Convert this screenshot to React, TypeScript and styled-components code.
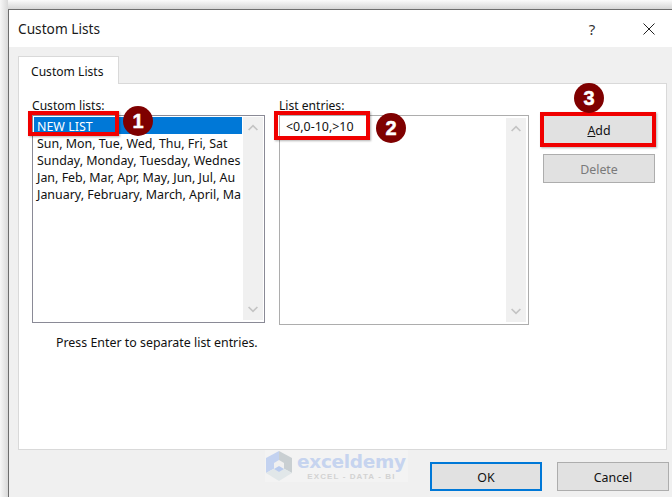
import React from 'react';
import styled, { createGlobalStyle } from 'styled-components';

const GlobalStyle = createGlobalStyle`
    html, body {
        margin: 0;
        padding: 0;
        height: 497px;
        overflow: hidden;
        background: #ffffff;
    }
    * {
        box-sizing: border-box;
    }
`;

const Page = styled.div`
    width: 672px;
    height: 497px;
    padding: 9px 0 0 8px;
    font-family: 'Noto Sans', 'Open Sans', sans-serif;
    font-size: 12px;
    color: #000;
    background:
        linear-gradient(90deg, #f7f7f7 0, #d9d9d9 8px, transparent 8px),
        linear-gradient(180deg, #fbfbfb 0, #d6d6d6 9px);
`;

const Dialog = styled.div`
    position: relative;
    height: 488px;
    display: flex;
    flex-direction: column;
    background: #f0f0f0;
    border-top: 1px solid #6e6e6e;
    border-left: 1px solid #6e6e6e;
`;

const TitleBar = styled.div`
    height: 37px;
    flex: none;
    background: #fff;
    display: flex;
    align-items: center;
    padding: 0 17px 0 9px;
`;

const Title = styled.div`
    flex: 1;
    font-size: 13.7px;
    color: #1a1a1a;
`;

const HelpMark = styled.div`
    width: 14px;
    margin-right: 44px;
    text-align: center;
    font-size: 15px;
    color: #333;
`;

const Content = styled.div`
    flex: 1;
    display: flex;
    flex-direction: column;
    padding: 9px 5px 0 9px;
`;

const Tab = styled.div`
    width: 101px;
    height: 28px;
    margin-bottom: -1px;
    position: relative;
    z-index: 1;
    background: #fff;
    border: 1px solid #d9d9d9;
    border-bottom: none;
    padding: 6px 0 0 12px;
    font-size: 12.1px;
    color: #111;
`;

const Panel = styled.div`
    height: 367px;
    background: #fff;
    border: 1px solid #d9d9d9;
    padding: 14px 0 0 13px;
`;

const Columns = styled.div`
    display: flex;
    align-items: flex-start;
`;

const ListColumn = styled.div<{ $width: number; $gap: number }>`
    width: ${(props) => props.$width}px;
    margin-right: ${(props) => props.$gap}px;
    flex: none;
`;

const FieldLabel = styled.div`
    height: 17px;
    line-height: 16px;
    font-size: 12.1px;
    color: #111;
`;

const ListBox = styled.div<{ $height: number; $border: string; $inset: number }>`
    height: ${(props) => props.$height}px;
    border: 1px solid ${(props) => props.$border};
    padding: 1px ${(props) => props.$inset}px 2px 1px;
    display: flex;
    background: #fff;
`;

const ListItems = styled.div`
    flex: 1;
    min-width: 0;
    overflow: hidden;
`;

const ListItem = styled.div<{ $selected?: boolean; $indent: number }>`
    height: 17px;
    line-height: 19px;
    padding-left: ${(props) => props.$indent}px;
    white-space: nowrap;
    font-size: 12.45px;
    color: ${(props) => (props.$selected ? '#fff' : '#111')};
    background: ${(props) => (props.$selected ? '#0078d7' : 'transparent')};
`;

const ScrollTrack = styled.div<{ $offset?: number }>`
    width: 20px;
    flex: none;
    margin: ${(props) => props.$offset ?? 0}px 0 0 1px;
    background: #f0f0f0;
    display: flex;
    flex-direction: column;
    justify-content: space-between;
    align-items: center;
    padding: 7px 0;
    color: #c4c4c4;
`;

const Hint = styled.div`
    margin: 9px 0 0 24px;
    line-height: 17px;
    font-size: 12.4px;
    color: #111;
`;

const SideButtons = styled.div`
    width: 112px;
    flex: none;
    margin-top: 17px;
    display: flex;
    flex-direction: column;
    gap: 8px;
`;

const DialogButton = styled.div<{ $tall?: boolean; $disabled?: boolean; $default?: boolean }>`
    width: 112px;
    height: ${(props) => (props.$tall ? 31 : 29)}px;
    padding-top: ${(props) => (props.$tall ? 0 : 1)}px;
    display: flex;
    align-items: center;
    justify-content: center;
    background: #e1e1e1;
    border: ${(props) => (props.$default ? '2px solid #0078d7' : '1px solid #adadad')};
    font-size: 12.4px;
    color: ${(props) => (props.$disabled ? '#7a7a7a' : '#111')};
`;

const AccessKey = styled.span`
    text-decoration: underline;
`;

const Footer = styled.div`
    flex: 1;
    display: flex;
    justify-content: flex-end;
    gap: 15px;
    padding-top: 12px;
    margin-right: -2px;
`;

const Callout = styled.div<{ $left: number; $top: number; $width: number; $height: number }>`
    position: absolute;
    left: ${(props) => props.$left}px;
    top: ${(props) => props.$top}px;
    width: ${(props) => props.$width}px;
    height: ${(props) => props.$height}px;
    border: 4px solid #f00000;
    box-shadow: 1px 1px 2px rgba(0, 0, 0, 0.3);
`;

const StepBadge = styled.div<{ $left: number; $top: number }>`
    position: absolute;
    left: ${(props) => props.$left}px;
    top: ${(props) => props.$top}px;
    width: 30px;
    height: 30px;
    border-radius: 50%;
    background: #7f0000;
    color: #fff;
    display: flex;
    align-items: center;
    justify-content: center;
    font-family: 'Liberation Sans', sans-serif;
    font-weight: 700;
    font-size: 20px;
    -webkit-text-stroke: 0.5px #fff;
`;

const Watermark = styled.div`
    position: absolute;
    left: 256px;
    top: 440px;
    width: 143px;
    height: 32px;
    background: #f3f3f3;
    display: flex;
    align-items: center;
    gap: 4px;
`;

const WatermarkText = styled.div`
    display: flex;
    flex-direction: column;
    align-items: center;
`;

const WatermarkName = styled.div`
    font-family: 'DejaVu Sans', sans-serif;
    font-weight: 700;
    font-size: 18.5px;
    line-height: 21px;
    letter-spacing: -0.3px;
    color: #c6d4ef;
`;

const WatermarkTag = styled.div`
    font-family: 'Liberation Sans', sans-serif;
    font-weight: 700;
    font-size: 8px;
    line-height: 9px;
    letter-spacing: 1.1px;
    color: #d2d2d2;
`;

const Chevron = ({ up }: { up?: boolean }) => (
    <svg width="10" height="7" viewBox="0 0 10 7" fill="none">
        <path
            d={up ? 'M.6 6 5 1.6 9.4 6' : 'M.6 1 5 5.4 9.4 1'}
            stroke="currentColor"
            strokeWidth="1.7"
        />
    </svg>
);

const CloseIcon = () => (
    <svg width="12" height="12" viewBox="0 0 12 12" fill="none">
        <path d="M.5.5 11.5 11.5M11.5.5.5 11.5" stroke="#222" strokeWidth="1" />
    </svg>
);

const LogoCube = () => (
    <svg width="28" height="32" viewBox="0 0 28 32">
        <path d="M14 1 1 8v15l13-7z" fill="#c3d2f0" />
        <path d="M14 1l13 7v15l-13-7z" fill="#c9cfd2" />
        <path d="M1 23l13-7 13 7-13 8z" fill="#e1e7e9" />
        <path d="M9 13l5-3 5 3v6l-5 3-5-3z" fill="#f0f0f0" />
        <path d="M9 19l5-3 5 3-5 3z" fill="#b9cbee" />
    </svg>
);

const LISTS = [
    'Sun, Mon, Tue, Wed, Thu, Fri, Sat',
    'Sunday, Monday, Tuesday, Wednes',
    'Jan, Feb, Mar, Apr, May, Jun, Jul, Au',
    'January, February, March, April, Ma',
];

export default function App() {
    return (
        <Page>
            <GlobalStyle />
            <Dialog>
                <TitleBar>
                    <Title>Custom Lists</Title>
                    <HelpMark>?</HelpMark>
                    <CloseIcon />
                </TitleBar>
                <Content>
                    <Tab>Custom Lists</Tab>
                    <Panel>
                        <Columns>
                            <ListColumn $width={233} $gap={14}>
                                <FieldLabel>Custom lists:</FieldLabel>
                                <ListBox $height={208} $border="#8a8a96" $inset={1}>
                                    <ListItems>
                                        <ListItem $selected $indent={3}>NEW LIST</ListItem>
                                        {LISTS.map((item) => (
                                            <ListItem key={item} $indent={3}>{item}</ListItem>
                                        ))}
                                    </ListItems>
                                    <ScrollTrack>
                                        <Chevron up />
                                        <Chevron />
                                    </ScrollTrack>
                                </ListBox>
                            </ListColumn>
                            <ListColumn $width={250} $gap={14}>
                                <FieldLabel>List entries:</FieldLabel>
                                <ListBox $height={210} $border="#adadad" $inset={2}>
                                    <ListItems>
                                        <ListItem $indent={5}>&lt;0,0-10,&gt;10</ListItem>
                                    </ListItems>
                                    <ScrollTrack $offset={1}>
                                        <Chevron up />
                                        <Chevron />
                                    </ScrollTrack>
                                </ListBox>
                            </ListColumn>
                            <SideButtons>
                                <DialogButton $tall>
                                    <span>
                                        <AccessKey>A</AccessKey>dd
                                    </span>
                                </DialogButton>
                                <DialogButton $disabled>Delete</DialogButton>
                            </SideButtons>
                        </Columns>
                        <Hint>Press Enter to separate list entries.</Hint>
                    </Panel>
                    <Footer>
                        <DialogButton $default>OK</DialogButton>
                        <DialogButton>Cancel</DialogButton>
                    </Footer>
                </Content>

                <Callout $left={19} $top={101} $width={91} $height={25} />
                <Callout $left={265} $top={101} $width={96} $height={29} />
                <Callout $left={531} $top={102} $width={116} $height={35} />
                <StepBadge $left={114} $top={96}>1</StepBadge>
                <StepBadge $left={367} $top={103}>2</StepBadge>
                <StepBadge $left={565} $top={73}>3</StepBadge>

                <Watermark>
                    <LogoCube />
                    <WatermarkText>
                        <WatermarkName>exceldemy</WatermarkName>
                        <WatermarkTag>EXCEL - DATA - BI</WatermarkTag>
                    </WatermarkText>
                </Watermark>
            </Dialog>
        </Page>
    );
}
